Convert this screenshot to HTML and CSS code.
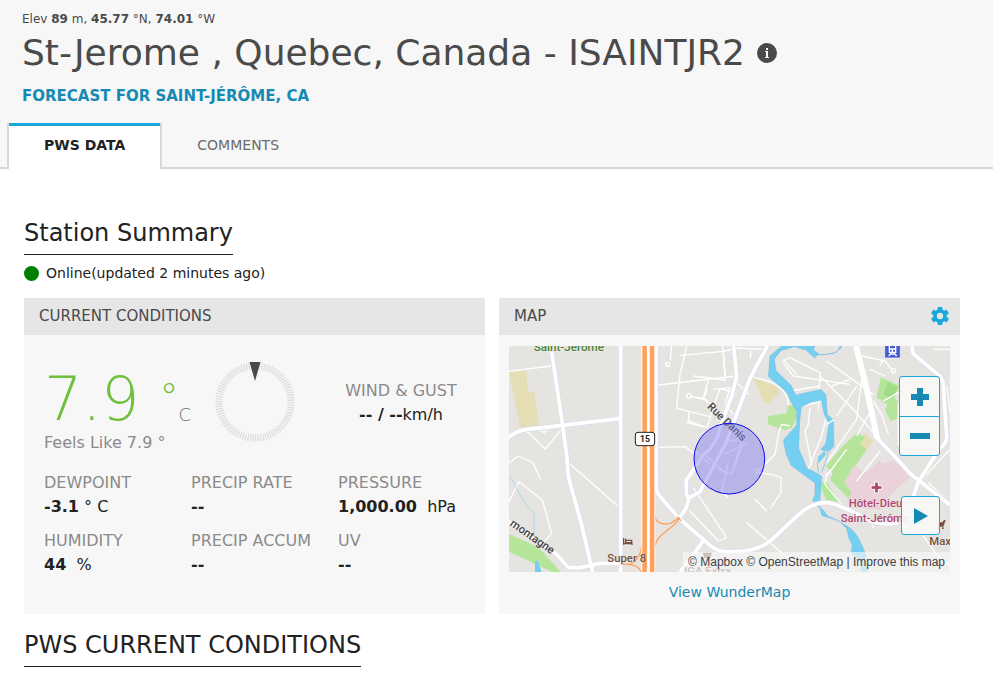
FILE: index.html
```html
<!DOCTYPE html>
<html lang="en">
<head>
<meta charset="utf-8">
<title>St-Jerome, Quebec, Canada - ISAINTJR2</title>
<meta name="viewport" content="width=device-width, initial-scale=1">
<link rel="stylesheet" href="styles.css">
</head>
<body>
<header class="station-header">
  <p class="coords">Elev <b>89</b> m, <b>45.77</b> °N, <b>74.01</b> °W</p>
  <h1 class="station-name">St-Jerome , Quebec, Canada - ISAINTJR2
    <button class="info" type="button" aria-label="Station information">
      <svg viewBox="0 0 20 20" width="20" height="20" aria-hidden="true"><circle cx="10" cy="10" r="10" fill="#4a4a4a"/><path d="M8 8h3v6h1v1H8v-1h1V9H8zM9 5h2v2H9z" fill="#f7f7f7"/></svg>
    </button>
  </h1>
  <a class="forecast" href="#forecast">FORECAST FOR SAINT-JÉRÔME, CA</a>
  <nav class="tabs">
    <a class="tab tab-active" href="#pws">PWS DATA</a>
    <a class="tab" href="#comments">COMMENTS</a>
  </nav>
</header>
<main class="content">
  <h2 class="section-title">Station Summary</h2>
  <p class="status"><span class="dot"></span>Online(updated 2 minutes ago)</p>
  <div class="panels">
    <section class="panel">
      <h3 class="panel-head">CURRENT CONDITIONS</h3>
      <div class="conditions">
        <div class="now">
          <div class="temp-block">
            <div class="temp"><span class="temp-value">7.9</span><span class="degree">°</span><span class="unit">C</span></div>
            <p class="label">Feels Like 7.9 °</p>
          </div>
          <svg class="dial" viewBox="0 0 80 82" width="80" height="82" aria-hidden="true">
            <circle cx="40" cy="42" r="36" fill="none" stroke="#dcdcdc" stroke-width="7" pathLength="180" stroke-dasharray="1 1"/>
            <path d="M34.500 2h11L40 21z" fill="#4a4a4a"/>
          </svg>
          <div class="wind"><p class="label">WIND &amp; GUST</p><p class="value"><b>-- / --</b>km/h</p></div>
        </div>
        <dl class="readings">
          <div><dt class="label">DEWPOINT</dt><dd class="value"><b>-3.1</b> ° C</dd></div>
          <div><dt class="label">PRECIP RATE</dt><dd class="value"><b>--</b></dd></div>
          <div><dt class="label">PRESSURE</dt><dd class="value"><b>1,000.00</b> &nbsp;hPa</dd></div>
          <div><dt class="label">HUMIDITY</dt><dd class="value"><b>44</b> &nbsp;%</dd></div>
          <div><dt class="label">PRECIP ACCUM</dt><dd class="value"><b>--</b></dd></div>
          <div><dt class="label">UV</dt><dd class="value"><b>--</b></dd></div>
        </dl>
      </div>
    </section>
    <section class="panel">
      <div class="panel-head"><h3>MAP</h3>
        <button class="gear" type="button" aria-label="Map settings"><svg viewBox="2 2 20 20" width="18" height="18" aria-hidden="true"><path fill="#1aa8dc" d="M19.430 12.980c.04-.32.07-.64.07-.98s-.03-.66-.07-.98l2.110-1.650c.19-.15.24-.42.12-.64l-2-3.460c-.12-.22-.39-.3-.61-.22l-2.490 1c-.52-.4-1.080-.73-1.690-.98l-.38-2.650C14.460 2.180 14.250 2 14 2h-4c-.25 0-.46.18-.49.42l-.38 2.650c-.61.25-1.170.59-1.690.98l-2.490-1c-.23-.09-.49 0-.61.22l-2 3.460c-.13.22-.07.49.12.64l2.110 1.650c-.04.32-.07.65-.07.98s.03.66.07.98l-2.110 1.650c-.19.15-.24.42-.12.64l2 3.460c.12.22.39.3.61.22l2.490-1c.52.4 1.080.73 1.690.98l.38 2.650c.03.24.24.42.49.42h4c.25 0 .46-.18.49-.42l.38-2.650c.61-.25 1.170-.59 1.690-.98l2.490 1c.23.09.49 0 .61-.22l2-3.460c.12-.22.07-.49-.12-.64zM12 15.500a3.500 3.500 0 1 1 0-7 3.500 3.500 0 0 1 0 7z"/></svg></button>
      </div>
      <div class="map-wrap">
        <div class="map">
          <svg class="map-art" viewBox="27 153 1323 678" preserveAspectRatio="xMidYMid slice" role="img" aria-label="Station map">
            <path fill="#e5e4e0" d="M27 153h1323v678H27z"/>
            <path fill="#e5deb5" d="M27 230l51-5 7 65h18l15 101-56 12z"/>
            <path fill="#b5e59b" d="M27 716l90 42 65 73h-24L27 770z"/>
            <g fill="none" stroke="#fff" stroke-width="4" stroke-linejoin="round">
              <path d="M27 229l126-16M80 408l56 54 48-58M118 405l14 8 12-11M210 507l144 127M27 505l27-22 45 20 23 50M27 620l30-60 70 55 28 100-25 28M475 270l235-27M515 153l-4 44M560 153l-20 85-10 102 100 25 30-85 33 10M625 255l-15 55 15 15M567 350l-2 28 55 20 13-35M595 308l20 4 30 25M668 153l8 90M475 457l80-2 35 25"/>
              <circle cx="503" cy="208" r="6"/><circle cx="567" cy="303" r="7"/>
            </g>
            <!-- Parks and hospital grounds east of the river -->
            <g transform="translate(540 153)">
              <path fill="#e5deb5" d="M218 93l74 30 6 20-30 28h-15zM553 262l28 23-23 28-23-20z"/>
              <path fill="#b5e59b" d="M265 210l55-8 5-26 20 5 5 35-15 30-20 6-52-17zM602 94l56 25-14 37 10 12-2 50-20 7-16-30 6-20-32-20zM532 260l22 14-14 20 20 18-65 90 32 42-17 18-60-60 8-22-20-20 50-60zM426 410l14-2 40 62-42-8-12-30z"/>
              <path fill="#a1dd88" d="M622 107l32 17-16 32-28-10z"/>
              <path fill="#ead2db" d="M520 360l38 20 40-36 17 10 35-18 42 55-75 70-17 32-80-10-15-30 10-12-22-32z"/>
              <g fill="none" stroke="#fff" stroke-width="4" stroke-linejoin="round">
                <path d="M0 28l130-12 38-10 85 4M130 12l5 90-95-12M212 14v22M100 130l50-5-15 50 25 30M30 150l40 10 12-30M20 230l60 15M165 105l43 42M218 93l55 15q50 25 53 70M45 315l45 40M75 325l60 55M130 325l75-35M145 285l40-5-25 90M190 290l-35 95-40-15M235 375l50-50 10-60 10-30 25 5M235 380l40 5 28 10v45l-30 45M225 460l35 35M40 425l100 150-25 10-85-90M145 350l-20 85 20 20"/>
                <path d="M310 45l20-10 90 45-5 110M310 50l30 40 170 25M350 85l-40-45M330 135l90-15M420 90l90 90 80 90M440 45l140 100M455 120l55-20M470 210l60-90M545 100l-15 120-90 130M570 200l-40 70M370 180l55-15 15 45-15 60-40 100M390 185l-5 50-10 20 20 100M545 30l70 15 20 25M600 60l10-20M570 70l45 20M580 165l25 40 20 60M610 165l45-25 20 25M655 170v130M760 10h50M800 120l10 80M600 315l-70 90M440 390l60-80M440 380l-5 35 50 60M735 390l75-80M745 410l65 60M695 520l70 100 45 40M690 480l-20 60M200 530l140 120M575 530l5 15"/>
                <circle cx="641" cy="74" r="6"/><circle cx="232" cy="376" r="6"/>
              </g>
              <path fill="#75cff0" stroke="#68aee8" stroke-width="1" d="M305 0l-35 30-5 62 30 25q30 20 35 45l20 35v40l-40 46 8 40 15 35 72 54v35l-7 15 10 18 20 10 15 20 35 15 22 23 7 30 10 20-4 22 30 30v48h20v-20l-7-55q-20-60-50-80l-35-20-45-14-6-20v-30l6-67-15-10-30-15-25-60 3-80 5-44 30-15 30-5 8 40 15 30-10 60-15 18 25 5 15-15-2-80-18-15-4-60-15-16-65 15-10 3-15-30-45-44-5-35 20-25 40-12 35 10 26 24 10-10 45-3 25-17-5-27h-8l8 25-10 15-47 9-22-17 10-20h-12l-5 10-30-10z"/>
              <path fill="#75cff0" d="M435 315l3 10-22 27-3-18z"/>
              <path fill="none" stroke="#8ccced" stroke-width="3" d="M416 335q-8 25 0 45M447 305q-5 35-22 75M436 305l-5 15"/>
              <path stroke="#fff" stroke-width="4" d="M440 235l22-14"/>
            </g>
            <path fill="none" stroke="#8ccced" stroke-width="2" d="M27 545c28 24 23 60 75 110v85"/>
            <path fill="#75cff0" d="M105 800l8-4 12 35h-20z"/>
            <g fill="none" stroke-linejoin="round">
              <path stroke="#dcdeed" stroke-width="16" d="M155 170l33 222 12 88 5 65 40 145 33 141M20 430q30-23 60-27l108-12 174-21M362 153v678M468 153v420q0 15 12 31l57 66 75 65q40 40 70 35 100 5 148-50l70-65q55-45 105-27 60 23 100 47 45 18 90 8M20 675l150 103 35 40h35l60-13h62M701 153l9 90-15 60-35 95q-5 45-51 83l-50 75v40q10 19 5 25-5 25-28 49M802 153l-52 97-50 135-20 55-80 150-35 20M612 735l-72 96M1068 153l27 107 37 170 48 50 50 55 120 95M1238 153q-5 22 12 32l60 50q21 15 20 40l10 150q0 22-20 35l-65 100-15 45"/>
              <path stroke="#fff" stroke-width="11" d="M155 170l33 222 12 88 5 65 40 145 33 141M20 430q30-23 60-27l108-12 174-21M362 153v678M468 153v420q0 15 12 31l57 66 75 65q40 40 70 35 100 5 148-50l70-65q55-45 105-27 60 23 100 47 45 18 90 8M20 675l150 103 35 40h35l60-13h62M701 153l9 90-15 60-35 95q-5 45-51 83l-50 75v40q10 19 5 25-5 25-28 49M802 153l-52 97-50 135-20 55-80 150-35 20M612 735l-72 96M1068 153l27 107 37 170 48 50 50 55 120 95M1238 153q-5 22 12 32l60 50q21 15 20 40l10 150q0 22-20 35l-65 100-15 45"/>
              <path stroke="#fff" stroke-width="18" d="M1068 153l27 107 37 170"/>
              <path stroke="#ffa05b" stroke-width="4" d="M462 655q5 40 50 30l27-17M537 672c-20 35-80 45-75 105M428 730q0 60-40 80M362 808q50-5 62 23M530 665l14 12"/>
              <path stroke="#fff" stroke-width="42" d="M445 153v678"/>
              <path stroke="#ffc28d" stroke-width="36" d="M445 153v678"/>
              <path stroke="#fff" stroke-width="10" d="M445 153v678"/>
              <path stroke="#ffa05b" stroke-width="13" d="M434 153v678M456 153v678"/>
            </g>
            <g class="map-label">
              <text x="101" y="167" font-size="35" fill="#4a8234">Saint-Jerome</text>
              <text transform="translate(620 337) rotate(44)" font-size="33" fill="#444">Rue Danis</text>
              <text transform="translate(28 690) rotate(35)" font-size="34" fill="#444">montagne</text>
              <text x="322" y="800" font-size="34" fill="#76513f">Super 8</text>
              <text x="552" y="840" font-size="34" fill="#76513f">IGA Extra</text>
              <text x="1046" y="637" font-size="34" fill="#ae4570">Hôtel-Dieu</text>
              <text x="1022" y="680" font-size="34" fill="#ae4570">Saint-Jérôme</text>
              <text x="1288" y="750" font-size="34" fill="#76513f">Max</text>
            </g>
            <rect x="406" y="412" width="58" height="40" rx="8" fill="#fff" stroke="#222" stroke-width="3"/>
            <text class="shield" x="435" y="441" text-anchor="middle" font-size="26" fill="#222">15</text>
            <path fill="none" stroke="#76513f" stroke-width="4" d="M371 729v20M371 746h25v4M377 736h18v10M377 731v12h18"/>
            <path fill="#ae4570" stroke="#fff" stroke-width="3" d="M1124 561h11v11h11v11h-11v11h-11v-11h-11v-11h11z"/>
            <path fill="#76513f" d="M608 773h28l-5 16h-18zM1312 682h15l5-7h5l-7 20h-14zM1314 697h5v5h-5zM1326 697h5v5h-5z"/>
            <path fill="#465cce" stroke="#fff" stroke-width="2" d="M1154 150h47v39h-47z"/>
            <path fill="none" stroke="#fff" stroke-width="4" d="M1168 153v19h19v-19M1168 162h19M1170 177h16M1166 183l7-8M1190 183l-7-8M1177 162v9"/>
            <circle cx="688" cy="491" r="106" fill="#807af0" fill-opacity=".45" stroke="#0b0bef" stroke-width="3"/>
          </svg>
          <div class="zoom-controls">
            <button type="button" aria-label="Zoom in"><svg viewBox="0 0 18 18" width="18" height="18"><path fill="#168ab3" d="M6 0h6v6h6v6h-6v6H6v-6H0V6h6z"/></svg></button>
            <button type="button" aria-label="Zoom out"><svg viewBox="0 0 20 20" width="20" height="20"><path fill="#168ab3" d="M0 7h20v6H0z"/></svg></button>
          </div>
          <button class="play" type="button" aria-label="Play animation"><svg viewBox="0 0 14 16" width="14" height="16"><path fill="#168ab3" d="M0 0l14 8-14 8z"/></svg></button>
          <p class="credits"><a href="#mapbox">© Mapbox</a> <a href="#osm">© OpenStreetMap</a> | <a href="#improve">Improve this map</a></p>
        </div>
        <a class="wundermap" href="#wundermap">View WunderMap</a>
      </div>
    </section>
  </div>
  <h2 class="section-title">PWS CURRENT CONDITIONS</h2>
</main>
</body>
</html>
```
FILE: styles.css
```css
* { box-sizing: border-box; }
body {
  margin: 0;
  background: #fff;
  color: #222;
  font: 16px/24px "DejaVu Sans", sans-serif;
}
h1, h2, h3, p, dl, dd { margin: 0; font-weight: 400; }
a { color: #168ab3; text-decoration: none; }
button { padding: 0; border: 0; background: none; cursor: pointer; }
svg { display: block; }

.station-header {
  padding-top: 9px;
  background: #f7f7f7;
  color: #4a4a4a;
}
.coords { padding-left: 22px; font-size: 12px; line-height: 20px; }
.station-name {
  display: flex;
  align-items: center;
  gap: 12px;
  padding-left: 22px;
  font-size: 36px;
  line-height: 48px;
}
.forecast {
  display: block;
  width: max-content;
  margin: 7px 0 0 22px;
  font-size: 15px;
  font-weight: 700;
}
.tabs {
  display: flex;
  margin-top: 15px;
  padding-left: 7px;
  height: 46px;
  box-shadow: inset 0 -2px #d8d8d8;
}
.tab {
  padding: 12px 35px;
  color: #6b6b6b;
  font-size: 14px;
  line-height: 20px;
}
.tab-active {
  border: solid #d8d8d8;
  border-width: 0 2px;
  background: linear-gradient(#1aa8dc 3px, #fff 3px);
  color: #222;
  font-weight: 700;
}

.content { padding: 44px 33px 0 24px; }
.section-title {
  width: max-content;
  border-bottom: 1px solid #222;
  padding: 4px 0;
  font-size: 24px;
  line-height: 33px;
}
.status {
  display: flex;
  align-items: center;
  gap: 7px;
  margin: 6px 0 13px;
  font-size: 14px;
}
.dot { width: 15px; height: 15px; border-radius: 50%; background: green; }

.panels {
  display: grid;
  grid-template-columns: 1fr 1fr;
  gap: 14px;
  margin-bottom: 11px;
}
.panel { background: #f7f7f7; }
.panel-head {
  display: flex;
  align-items: center;
  justify-content: space-between;
  height: 37px;
  padding: 0 11px 2px 15px;
  background: #e6e6e6;
  color: #4a4a4a;
  font-size: 15px;
}
.panel-head h3 { font-size: 15px; }

.conditions { padding: 25px 20px 36px; }
.now {
  display: grid;
  grid-template-columns: 171px 80px 1fr;
}
.temp-block { padding-top: 7px; }
.temp { display: flex; height: 64px; line-height: 64px; }
.temp-value { color: #70bf3d; font-size: 60px; font-weight: 200; }
.degree { margin-left: 20px; color: #70bf3d; font-size: 38px; line-height: 60px; font-weight: 200; }
.unit { color: #6b6b6b; font-size: 18px; line-height: 96px; font-weight: 200; }
.label { color: #8a8a8a; }
.wind { padding: 19px 0 0 42px; text-align: center; }
.readings {
  display: grid;
  grid-template-columns: 147px 147px 1fr;
  row-gap: 10px;
  margin-top: 16px;
}

.map-wrap { padding: 11px 10px 10px; }
.map { position: relative; }
.map-art { width: 100%; height: 226px; }
.map-label { font-family: "Roboto", sans-serif; font-weight: 500; paint-order: stroke; stroke: #f0efec; stroke-width: 2px; }
.shield { font-family: "Roboto", sans-serif; font-weight: 700; }
.zoom-controls {
  position: absolute;
  top: 30px;
  right: 10px;
  width: 41px;
  border: 1px solid #1aa8dc;
  border-radius: 3px;
  background: #f7f7f7ee;
}
.zoom-controls button, .play { display: grid; place-items: center; width: 100%; height: 39px; }
.zoom-controls button + button { border-top: 1px solid #1aa8dc; }
.play {
  position: absolute;
  top: 150px;
  right: 10px;
  width: 39px;
  border: 1px solid #1aa8dc;
  border-radius: 3px;
  background: #f7f7f7ee;
}
.credits {
  position: absolute;
  right: 0;
  bottom: 0;
  padding: 0 5px;
  background: #f7f7f7aa;
  color: #404040;
  font: 12px/20px "Liberation Sans", sans-serif;
}
.credits a { color: #404040; }
.wundermap {
  display: block;
  width: max-content;
  margin: 8px auto 0;
  font-size: 14px;
}
```
